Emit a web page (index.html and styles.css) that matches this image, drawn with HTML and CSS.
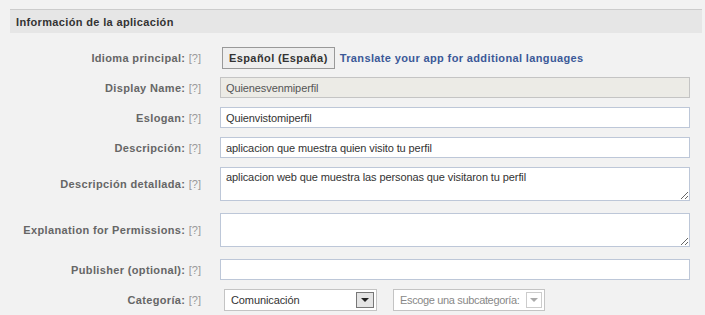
FILE: index.html
```html
<!DOCTYPE html>
<html lang="es">
<head>
    <meta charset="UTF-8">
    <meta name="viewport" content="width=device-width, initial-scale=1.0">
    <title>Información de la aplicación</title>
    <link rel="stylesheet" href="styles.css">
</head>
<body>
    <div class="section-title">Información de la aplicación</div>

    <form class="app-form">
        <div class="row row-first">
            <label class="field-label">Idioma principal: <span class="help">[?]</span></label>
            <div class="field">
                <button type="button" class="lang-button">Español (España)</button>
                <a href="#" class="translate-link">Translate your app for additional languages</a>
            </div>
        </div>

        <div class="row">
            <label class="field-label">Display Name: <span class="help">[?]</span></label>
            <div class="field">
                <input type="text" class="text-input disabled" value="Quienesvenmiperfil" readonly>
            </div>
        </div>

        <div class="row">
            <label class="field-label">Eslogan: <span class="help">[?]</span></label>
            <div class="field">
                <input type="text" class="text-input" value="Quienvistomiperfil">
            </div>
        </div>

        <div class="row">
            <label class="field-label">Descripción: <span class="help">[?]</span></label>
            <div class="field">
                <input type="text" class="text-input" value="aplicacion que muestra quien visito tu perfil">
            </div>
        </div>

        <div class="row row-tall">
            <label class="field-label">Descripción detallada: <span class="help">[?]</span></label>
            <div class="field">
                <textarea class="text-area">aplicacion web que muestra las personas que visitaron tu perfil</textarea>
            </div>
        </div>

        <div class="row row-tall">
            <label class="field-label">Explanation for Permissions: <span class="help">[?]</span></label>
            <div class="field">
                <textarea class="text-area"></textarea>
            </div>
        </div>

        <div class="row">
            <label class="field-label">Publisher (optional): <span class="help">[?]</span></label>
            <div class="field">
                <input type="text" class="text-input">
            </div>
        </div>

        <div class="row">
            <label class="field-label">Categoría: <span class="help">[?]</span></label>
            <div class="field selects">
                <div class="select">
                    <span class="select-text">Comunicación</span>
                    <span class="select-arrow"></span>
                </div>
                <div class="select select-disabled">
                    <span class="select-text">Escoge una subcategoría:</span>
                    <span class="select-arrow"></span>
                </div>
            </div>
        </div>
    </form>
</body>
</html>
```

FILE: styles.css
```css
body {
    margin: 0;
    padding: 9px 3px 0 10px;
    background-color: #f2f2f2;
    font-family: "Liberation Sans", Arial, sans-serif;
    font-size: 11px;
    letter-spacing: -0.1px;
    color: #333;
}
.section-title {
    height: 23px;
    line-height: 24px;
    padding-left: 6px;
    border-top: 1px solid #cccccc;
    background-color: #e6e6e6;
    font-weight: bold;
    letter-spacing: 0.35px;
    color: #333;
}
.app-form {
    margin: 0;
}
.row {
    display: flex;
    align-items: center;
    margin-bottom: 9px;
}
.row-first {
    margin-top: 14px;
    margin-bottom: 8px;
}
.row-tall {
    margin-bottom: 12px;
}
.field-label {
    width: 191px;
    flex-shrink: 0;
    text-align: right;
    font-weight: bold;
    letter-spacing: 0.35px;
    color: #666;
}
.help {
    font-weight: normal;
    letter-spacing: 0;
    color: #999;
}
.field {
    margin-left: 19px;
    display: flex;
    align-items: center;
}
.lang-button {
    height: 22px;
    margin-left: 2px;
    padding: 0 6px;
    border: 1px solid #999;
    background-color: #eeeeee;
    font-family: inherit;
    font-size: 11px;
    font-weight: bold;
    letter-spacing: 0.4px;
    color: #333;
}
.translate-link {
    margin-left: 5px;
    color: #3b5998;
    font-weight: bold;
    letter-spacing: 0.37px;
    text-decoration: none;
}
.text-input {
    box-sizing: border-box;
    width: 470px;
    height: 21px;
    padding: 0 5px;
    border: 1px solid #bdc7d8;
    background-color: #fff;
    font-family: inherit;
    font-size: 11px;
    letter-spacing: -0.1px;
    color: #333;
    outline: none;
}
.text-input.disabled {
    background-color: #ecebe6;
    border-color: #c4c4c4;
    color: #555;
}
.text-area {
    box-sizing: border-box;
    display: block;
    width: 470px;
    height: 34px;
    padding: 3px 5px;
    border: 1px solid #bdc7d8;
    background-color: #fff;
    font-family: inherit;
    font-size: 11px;
    letter-spacing: -0.1px;
    color: #333;
    outline: none;
}
.selects {
    margin-left: 23px;
    gap: 16px;
}
.select {
    box-sizing: border-box;
    width: 153px;
    height: 22px;
    padding: 0 2px 0 6px;
    border: 1px solid #c4c4c4;
    background-color: #fff;
    display: flex;
    align-items: center;
    justify-content: space-between;
    white-space: nowrap;
    color: #333;
}
.select-arrow {
    box-sizing: border-box;
    flex-shrink: 0;
    width: 18px;
    height: 16px;
    border: 1px solid #777;
    background-color: #e4e4e4;
    display: flex;
    align-items: center;
    justify-content: center;
}
.select-arrow::after {
    content: "";
    border-left: 4px solid transparent;
    border-right: 4px solid transparent;
    border-top: 4px solid #222;
}
.select-disabled {
    width: 152px;
    color: #888;
}
.select-disabled .select-text {
    letter-spacing: -0.35px;
}
.select-disabled .select-arrow {
    width: 16px;
    border-color: #ccc;
    background-color: #fff;
}
.select-disabled .select-arrow::after {
    border-top-color: #aaa;
}
```
